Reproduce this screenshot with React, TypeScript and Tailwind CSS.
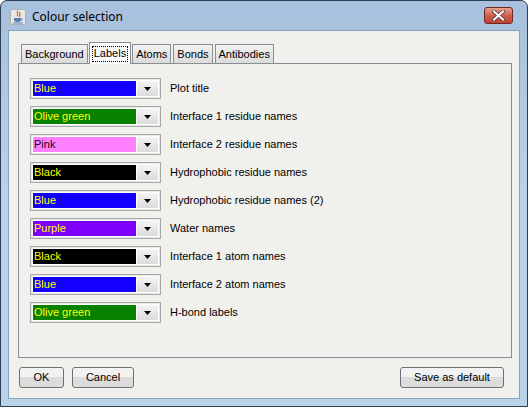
import React from 'react'

interface ColourRow {
  name: string
  swatch: string
  text: string
  label: string
}

const rows: ColourRow[] = [
  { name: 'Blue', swatch: 'bg-[#1400ff]', text: 'text-[#ffff00]', label: 'Plot title' },
  { name: 'Olive green', swatch: 'bg-[#088000]', text: 'text-[#ffff00]', label: 'Interface 1 residue names' },
  { name: 'Pink', swatch: 'bg-[#ff80ff]', text: 'text-[#200020]', label: 'Interface 2 residue names' },
  { name: 'Black', swatch: 'bg-black', text: 'text-[#ffff00]', label: 'Hydrophobic residue names' },
  { name: 'Blue', swatch: 'bg-[#1400ff]', text: 'text-[#ffff00]', label: 'Hydrophobic residue names (2)' },
  { name: 'Purple', swatch: 'bg-[#8000ff]', text: 'text-[#ffff00]', label: 'Water names' },
  { name: 'Black', swatch: 'bg-black', text: 'text-[#ffff00]', label: 'Interface 1 atom names' },
  { name: 'Blue', swatch: 'bg-[#1400ff]', text: 'text-[#ffff00]', label: 'Interface 2 atom names' },
  { name: 'Olive green', swatch: 'bg-[#088000]', text: 'text-[#ffff00]', label: 'H-bond labels' },
]

const tabs = ['Background', 'Labels', 'Atoms', 'Bonds', 'Antibodies']

function JavaIcon() {
  return (
    <svg width="16" height="16" viewBox="0 0 16 16">
      <rect x="0.5" y="0.5" width="15" height="15" rx="2" fill="#e8e8e8" stroke="#b0b0b0" />
      <path d="M8 2 C6 4 9 5 7 7 M10 3 C9 5 11 6 9 8" stroke="#e0701a" strokeWidth="1.3" fill="none" />
      <path d="M4 9 H11 V11 C11 12.5 9.5 13 7.5 13 C5.5 13 4 12.5 4 11 Z" fill="#5a7fb0" />
      <path d="M11 9.5 C13 9.5 13 11.5 11 11.5" stroke="#5a7fb0" strokeWidth="1" fill="none" />
      <path d="M3 14 H13" stroke="#5a7fb0" strokeWidth="1" />
    </svg>
  )
}

function CloseButton() {
  return (
    <div className="w-[29px] h-[17px] rounded-[3px] border border-[#6b2a24] bg-gradient-to-b from-[#e8a192] via-[#d0604c] to-[#c1412e] flex items-center justify-center">
      <svg width="13" height="11" viewBox="0 0 13 11">
        <path d="M2 1.5 L11 9.5 M11 1.5 L2 9.5" stroke="#4a3a3a" strokeWidth="3.6" strokeLinecap="square" />
        <path d="M2 1.5 L11 9.5 M11 1.5 L2 9.5" stroke="#ffffff" strokeWidth="2" strokeLinecap="square" />
      </svg>
    </div>
  )
}

function ColourCombo({ row }: { row: ColourRow }) {
  return (
    <div className="w-[131px] h-[21px] border border-[#a7a7a7] bg-white flex p-[2px] shadow-[inset_0_0_0_1px_#e8e8e8]">
      <div className={`flex-1 ${row.swatch} ${row.text} flex items-center pl-[1px] leading-none`}>{row.name}</div>
      <div className="w-[21px] ml-[1px] bg-gradient-to-b from-[#f4f4f4] to-[#dcdcdc] flex items-center justify-center">
        <svg width="7" height="4" viewBox="0 0 7 4">
          <path d="M0 0 H7 L3.5 4 Z" fill="#000" />
        </svg>
      </div>
    </div>
  )
}

function Button({ label, width }: { label: string; width: string }) {
  return (
    <div className={`${width} h-[21px] rounded-[3px] border border-[#707070] bg-gradient-to-b from-[#f2f2f2] from-50% to-[#dcdcdc] to-50% flex items-center justify-center text-[#000]`}>
      {label}
    </div>
  )
}

export default function App() {
  return (
    <div
      className="w-[528px] h-[407px] text-[11px] text-black"
      style={{ fontFamily: '"Liberation Sans", Arial, sans-serif' }}
    >
      <div className="w-full h-full rounded-t-[7px] border border-[#2c3e52] bg-gradient-to-b from-[#a6c0dd] via-[#bcd2ea] to-[#bad2ea] flex flex-col px-[7px] pb-[7px]">
        {/* title bar */}
        <div className="h-[29px] flex items-center pl-[2px] pr-[7px] pt-[2px]">
          <JavaIcon />
          <span className="ml-[6px] text-[12px] text-black" style={{ fontFamily: '"Noto Sans", "Liberation Sans", sans-serif' }}>
            Colour selection
          </span>
          <div className="ml-auto -mt-[3px]">
            <CloseButton />
          </div>
        </div>

        {/* client area */}
        <div className="flex-1 border border-[#8aa1bb] bg-[#f0f0ed] flex flex-col pl-[9px] pr-[7px]">
          <div className="flex items-end pt-[11px] pl-[2px] h-[32px]">
            {tabs.map((t) =>
              t === 'Labels' ? (
                <div
                  key={t}
                  className="h-[22px] -mb-[1px] relative z-10 px-[2px] border border-b-0 border-[#898c95] bg-[#fcfcfc] flex items-center"
                >
                  <span className="px-[1px] border border-dotted border-black leading-[13px] pb-[1px]">{t}</span>
                </div>
              ) : (
                <div
                  key={t}
                  className="h-[19px] mx-[1px] px-[3px] border border-b-0 border-[#898c95] bg-gradient-to-b from-[#f2f2f2] to-[#dbdbdb] flex items-center"
                >
                  {t}
                </div>
              ),
            )}
          </div>
          <div className="h-[295px] border border-[#898c95] bg-[#f0f0ed] flex flex-col gap-[7px] pl-[11px] pt-[14px]">
            {rows.map((r, i) => (
              <div key={i} className="flex items-center gap-[9px]">
                <ColourCombo row={r} />
                <span>{r.label}</span>
              </div>
            ))}
          </div>
          <div className="flex items-center pt-[9px] pl-[1px] pr-[8px]">
            <Button label="OK" width="w-[45px]" />
            <div className="w-[8px]" />
            <Button label="Cancel" width="w-[62px]" />
            <div className="ml-auto">
              <Button label="Save as default" width="w-[104px]" />
            </div>
          </div>
        </div>
      </div>
    </div>
  )
}
